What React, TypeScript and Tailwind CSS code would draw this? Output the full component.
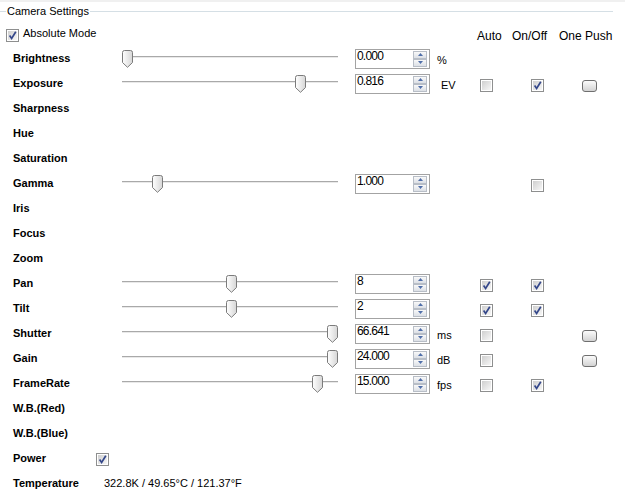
import type { ReactNode } from 'react';

interface SettingRow {
  label: string;
  thumb?: number;
  value?: string;
  unit?: string;
  auto?: boolean;
  onOff?: boolean;
  push?: boolean;
}

const ROWS: SettingRow[] = [
  { label: 'Brightness', thumb: 0, value: '0.000', unit: '%' },
  { label: 'Exposure', thumb: 173, value: '0.816', unit: 'EV', auto: false, onOff: true, push: true },
  { label: 'Sharpness' },
  { label: 'Hue' },
  { label: 'Saturation' },
  { label: 'Gamma', thumb: 30, value: '1.000', onOff: false },
  { label: 'Iris' },
  { label: 'Focus' },
  { label: 'Zoom' },
  { label: 'Pan', thumb: 104, value: '8', auto: true, onOff: true },
  { label: 'Tilt', thumb: 104, value: '2', auto: true, onOff: true },
  { label: 'Shutter', thumb: 205, value: '66.641', unit: 'ms', auto: false, push: true },
  { label: 'Gain', thumb: 205, value: '24.000', unit: 'dB', auto: false, push: true },
  { label: 'FrameRate', thumb: 190, value: '15.000', unit: 'fps', auto: false, onOff: true },
  { label: 'W.B.(Red)' },
  { label: 'W.B.(Blue)' },
];

function CheckBox({ checked }: { checked: boolean }) {
  return (
    <div className="w-[13px] h-[13px] border border-[#8e8f8f] bg-white p-px">
      <div className="w-full h-full bg-linear-to-br from-[#cfcfcf] to-[#f7f7f7]">
        {checked && (
          <svg width="9" height="9" viewBox="0 0 9 9">
            <path d="M1.6 4.6 L3.6 7.4 L7.8 0.8" fill="none" stroke="#34478a" strokeWidth="1.7" />
          </svg>
        )}
      </div>
    </div>
  );
}

function PushButton() {
  return (
    <div className="w-[15px] h-[12px] rounded-[3px] border border-[#6f6f6f] bg-linear-to-b from-[#fbfbfb] to-[#d3d3d3]" />
  );
}

function Slider({ thumb }: { thumb: number }) {
  return (
    <div className="relative w-[216px] h-[25px] pt-[10px]">
      <div className="h-px bg-[#a9a9a9]" />
      <div className="h-px bg-[#e9e9e9]" />
      <svg
        className="absolute top-[4px]"
        style={{ left: thumb }}
        width="11"
        height="18"
        viewBox="0 0 11 18"
      >
        <defs>
          <linearGradient id="thumbFill" x1="0" y1="0" x2="1" y2="0">
            <stop offset="0" stopColor="#ffffff" />
            <stop offset="1" stopColor="#d6d6d6" />
          </linearGradient>
        </defs>
        <path
          d="M0.5 2.5 Q0.5 0.5 2.5 0.5 H8.5 Q10.5 0.5 10.5 2.5 V12.5 L5.5 17.3 L0.5 12.5 Z"
          fill="url(#thumbFill)"
          stroke="#7b7b7b"
        />
      </svg>
    </div>
  );
}

function SpinArrow({ up }: { up: boolean }) {
  return (
    <div className="flex-1 flex items-center justify-center border border-[#b8bec7] bg-linear-to-b from-[#f9f9f9] to-[#dce0e6]">
      <svg width="5" height="3" viewBox="0 0 5 3">
        <path d={up ? 'M0 3 L2.5 0 L5 3 Z' : 'M0 0 L2.5 3 L5 0 Z'} fill="#4f6ea9" />
      </svg>
    </div>
  );
}

function Spinner({ value }: { value: string }) {
  return (
    <div className="flex w-[75px] h-[20px] border border-[#a3a3a3] bg-white">
      <div className="flex-1 pl-[1px] -mt-[1px] text-[12px] leading-[14px] tracking-[-0.8px]">{value}</div>
      <div className="flex flex-col w-[14px] py-px mr-[2px]">
        <SpinArrow up />
        <SpinArrow up={false} />
      </div>
    </div>
  );
}

function Cell({ width, children }: { width: string; children?: ReactNode }) {
  return <div className={`${width} flex items-center mt-[4px]`}>{children}</div>;
}

export default function App() {
  return (
    <div className="w-[625px] h-[499px] bg-white text-black font-['Liberation_Sans',Arial,sans-serif] overflow-hidden">
      <div className="h-[2px] bg-[#f0f0f0]" />

      {/* group box caption */}
      <div className="flex items-center h-[18px] w-[613px]">
        <div className="w-[6px] h-px bg-[#d5dfe5]" />
        <span className="text-[11px] leading-[13px] px-px">Camera Settings</span>
        <div className="flex-1 h-px bg-[#d5dfe5]" />
      </div>

      {/* absolute mode + column headers */}
      <div className="flex h-[26px] items-start">
        <div className="w-[477px] flex items-center pl-[6px] mt-[7px] gap-[4px]">
          <CheckBox checked />
          <span className="text-[11px] leading-[13px] mb-[4px]">Absolute Mode</span>
        </div>
        <span className="w-[35px] text-[12px] leading-[14px] pt-[9px]">Auto</span>
        <span className="w-[47px] text-[12px] leading-[14px] pt-[9px]">On/Off</span>
        <span className="text-[12px] leading-[14px] pt-[9px]">One Push</span>
      </div>

      {ROWS.map(row => (
        <div key={row.label} className="flex h-[25px] items-center">
          <div className="w-[122px] pl-[13px] text-[11px] font-bold leading-[13px]">{row.label}</div>
          {row.thumb !== undefined && (
            <>
              <Slider thumb={row.thumb} />
              <div className="w-[17px]" />
              <Spinner value={row.value ?? ''} />
              <div className={`w-[50px] text-[11px] leading-[13px] mt-[3px] ${row.unit === 'EV' ? 'pl-[11px]' : 'pl-[7px]'}`}>
                {row.unit}
              </div>
              <Cell width="w-[51px]">{row.auto !== undefined && <CheckBox checked={row.auto} />}</Cell>
              <Cell width="w-[51px]">{row.onOff !== undefined && <CheckBox checked={row.onOff} />}</Cell>
              <Cell width="w-[40px]">{row.push && <PushButton />}</Cell>
            </>
          )}
        </div>
      ))}

      <div className="flex h-[25px] items-center">
        <div className="w-[96px] pl-[13px] text-[11px] font-bold leading-[13px]">Power</div>
        <div className="mt-px">
          <CheckBox checked />
        </div>
      </div>

      <div className="flex h-[24px] items-center">
        <div className="w-[104px] pl-[13px] text-[11px] font-bold leading-[13px]">Temperature</div>
        <span className="text-[11px] leading-[13px]">322.8K / 49.65°C / 121.37°F</span>
      </div>
    </div>
  );
}
